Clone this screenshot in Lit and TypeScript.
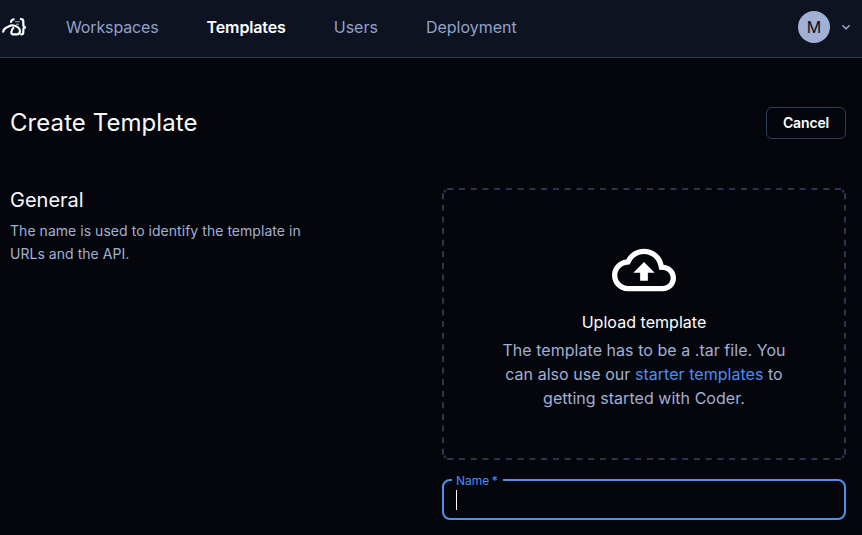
import { LitElement, html, css } from "lit";
import { customElement } from "lit/decorators.js";

@customElement("app-navbar")
class AppNavbar extends LitElement {
  static styles = css`
    :host { display: block; }
    .bar { box-sizing: border-box; height: 58px; background: #0d1320; border-bottom: 1px solid #2d3750; display: flex; align-items: center; padding: 0 10px 3px 2px; }
    .logo { width: 25px; height: 20px; flex: none; display: block; }
    nav { display: flex; gap: 48px; margin-left: 39px; flex: 1; font-size: 16px; line-height: 24px; color: #92a2cb; }
    .first { letter-spacing: -0.13px; }
    .active { color: #fff; font-weight: 600; letter-spacing: -0.13px; }
    .avatar { width: 32px; height: 32px; border-radius: 50%; background: #a2b0d3; color: #0c101b; display: flex; align-items: center; justify-content: center; font-size: 16px; }
    .chevron { width: 12px; height: 12px; margin-left: 10px; }
  `;
  render() {
    return html`<header class="bar">
      <svg class="logo" viewBox="0 0 25 20" fill="none" stroke="#fff" stroke-width="2.2" stroke-linecap="round" stroke-linejoin="round">
        <path d="M1.2 14.6C1.6 12.4 3 11 5 10.2C7 9.4 8.3 8.4 10.3 8.4C13.5 8.4 18 10.6 18 13.8C18 16.3 16.8 17.4 14.6 17.4H11.2C9.6 17.4 9.3 16.4 9.4 15C9.5 13.2 10.2 12 11.3 11"/>
        <path d="M9 4.9C9.2 3.6 10 2.6 11.6 2.3"/>
        <path d="M18.8 2.1C20.8 2.1 21.3 2.7 21.3 4.4V7.6C21.3 9.3 21.9 10.1 23.1 10.4C21.9 10.7 21.3 11.5 21.3 13V15.2C21.3 16.8 20.7 17.4 19.2 17.4"/>
        <path d="M13.5 4.7H17.3M14.4 7.2H16.6" stroke-width="1" stroke="#aab0bd"/>
      </svg>
      <nav><span class="first">Workspaces</span><span class="active">Templates</span><span>Users</span><span>Deployment</span></nav>
      <div class="avatar">M</div>
      <svg class="chevron" viewBox="0 0 12 12" fill="none" stroke="#a2b0d3" stroke-width="1.3"><path d="M2.3 4.2L6 7.8L9.7 4.2"/></svg>
    </header>`;
  }
}

@customElement("app-root")
class AppRoot extends LitElement {
  static styles = css`
    :host { display: block; box-sizing: border-box; height: 535px; overflow: hidden; background: #04060b; color: #f8f9fd; font-family: Inter, sans-serif; }
    main { padding: 49px 16px 0 10px; }
    .heading { display: flex; justify-content: space-between; align-items: center; height: 32px; }
    h1 { margin: 0; font-size: 24px; line-height: 32px; font-weight: 400; letter-spacing: 0.07px; }
    .cancel { box-sizing: border-box; width: 80px; height: 32px; border: 1px solid #2f3c5a; border-radius: 6px; background: transparent; color: #fff; font: 600 14px/22px Inter, sans-serif; letter-spacing: -0.15px; padding: 0; }
    .section { display: grid; grid-template-columns: 312px 404px; column-gap: 120px; margin-top: 49px; }
    h2 { margin: 0 0 7px; font-size: 20px; line-height: 24px; font-weight: 400; }
    .info p { margin: 0; font-size: 14px; line-height: 23px; letter-spacing: 0.04px; color: #a2b0d3; }
    .upload { position: relative; box-sizing: border-box; height: 272px; display: flex; flex-direction: column; align-items: center; padding-top: 50px; text-align: center; font-size: 16px; line-height: 24px; letter-spacing: 0.04px; }
    .outline { position: absolute; inset: 0; width: 404px; height: 272px; fill: none; stroke: #2b3550; stroke-width: 2; }
    .horizontal { stroke-dasharray: 6 5.75; }
    .vertical { stroke-dasharray: 6 5.62; }
    .cloud { width: 64px; height: 64px; fill: #fff; }
    .title { margin-top: 8px; color: #fff; }
    .hint { margin-top: 4px; color: #a2b0d3; white-space: nowrap; }
    .link { color: #4c8df6; }
    .field { position: relative; box-sizing: border-box; height: 41px; margin-top: 19px; border: 2px solid #5090ea; border-radius: 8px; display: flex; align-items: center; padding-left: 12px; }
    .label { position: absolute; left: 8px; top: -8px; width: 51px; box-sizing: border-box; padding-left: 4px; background: #04060b; color: #4c8df6; font-size: 12px; line-height: 16px; word-spacing: -1px; white-space: nowrap; }
    .caret { width: 1px; height: 20px; background: #fff; }
  `;
  render() {
    return html`<app-navbar></app-navbar>
      <main>
        <div class="heading"><h1>Create Template</h1><button class="cancel">Cancel</button></div>
        <section class="section">
          <div class="info"><h2>General</h2><p>The name is used to identify the template in URLs and the API.</p></div>
          <div>
            <div class="upload">
              <svg class="outline" viewBox="0 0 404 272">
                <path class="horizontal" d="M5.2 1H398.9M5.2 271H398.9"/>
                <path class="vertical" d="M1 5.2V266.8M403 5.2V266.8"/>
                <path d="M1.9 4.2L3.8 2.2M400.2 2.2L402.1 4.2M1.9 267.8L3.8 269.8M400.2 269.8L402.1 267.8"/>
              </svg>
              <svg class="cloud" viewBox="0 0 24 24"><path d="M19.35 10.04C18.67 6.59 15.64 4 12 4 9.11 4 6.6 5.64 5.35 8.04 2.34 8.36 0 10.91 0 14c0 3.31 2.69 6 6 6h13c2.76 0 5-2.24 5-5 0-2.64-2.05-4.78-4.65-4.96zM19 18H6c-2.21 0-4-1.79-4-4 0-2.05 1.53-3.76 3.56-3.97l1.07-.11.5-.95C8.08 7.14 9.94 6 12 6c2.62 0 4.88 1.86 5.39 4.43l.3 1.5 1.53.11c1.56.1 2.78 1.41 2.78 2.96 0 1.65-1.35 3-3 3zM8 13h2.55v3h2.9v-3H16l-4-4z"/></svg>
              <div class="title">Upload template</div>
              <div class="hint">
                <div>The template has to be a .tar file. You</div>
                <div>can also use our <span class="link">starter templates</span> to</div>
                <div>getting started with Coder.</div>
              </div>
            </div>
            <div class="field"><span class="label">Name *</span><span class="caret"></span></div>
          </div>
        </section>
      </main>`;
  }
}
